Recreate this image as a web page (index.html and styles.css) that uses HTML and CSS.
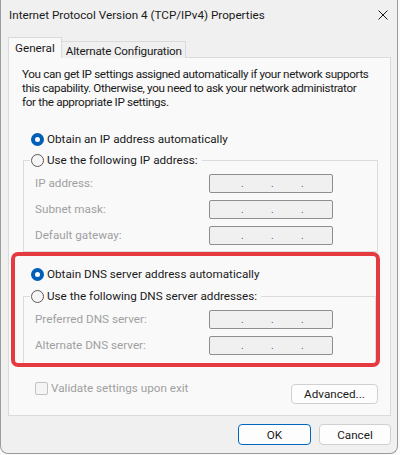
FILE: index.html
```html
<!DOCTYPE html>
<html lang="en">
<head>
    <meta charset="UTF-8">
    <title>Internet Protocol Version 4 (TCP/IPv4) Properties</title>
    <link rel="stylesheet" href="styles.css">
</head>
<body>
    <div class="window">
        <div class="titlebar">
            <span class="title">Internet Protocol Version 4 (TCP/IPv4) Properties</span>
            <svg class="close" width="10" height="10" viewBox="0 0 10 10">
                <path d="M0.5 0.5 L9.5 9.5 M9.5 0.5 L0.5 9.5" stroke="#1a1a1a" stroke-width="1" fill="none"/>
            </svg>
        </div>
        <div class="body">
            <div class="tabs">
                <div class="tab active">General</div>
                <div class="tab">Alternate Configuration</div>
            </div>
            <div class="panel">
                <p class="intro">You can get IP settings assigned automatically if your network supports<br>
                this capability. Otherwise, you need to ask your network administrator<br>
                for the appropriate IP settings.</p>

                <label class="radio first"><span class="dot checked"></span>Obtain an IP address automatically</label>
                <fieldset class="group ip-group">
                    <legend><label class="radio"><span class="dot"></span>Use the following IP address:</label></legend>
                    <div class="row"><span class="label">IP address:</span><span class="ipbox"><i>.</i><i>.</i><i>.</i></span></div>
                    <div class="row"><span class="label">Subnet mask:</span><span class="ipbox"><i>.</i><i>.</i><i>.</i></span></div>
                    <div class="row"><span class="label">Default gateway:</span><span class="ipbox"><i>.</i><i>.</i><i>.</i></span></div>
                </fieldset>

                <label class="radio dns-first"><span class="dot checked"></span>Obtain DNS server address automatically</label>
                <fieldset class="group dns-group">
                    <legend><label class="radio"><span class="dot"></span>Use the following DNS server addresses:</label></legend>
                    <div class="row"><span class="label">Preferred DNS server:</span><span class="ipbox"><i>.</i><i>.</i><i>.</i></span></div>
                    <div class="row"><span class="label">Alternate DNS server:</span><span class="ipbox"><i>.</i><i>.</i><i>.</i></span></div>
                </fieldset>

                <div class="options">
                    <label class="check"><span class="box"></span>Validate settings upon exit</label>
                    <button type="button" class="btn advanced">Advanced...</button>
                </div>

                <div class="highlight"></div>
            </div>
            <div class="footer">
                <button type="button" class="btn ok">OK</button>
                <button type="button" class="btn">Cancel</button>
            </div>
        </div>
    </div>
</body>
</html>
```

FILE: styles.css
```css
body {
    margin: 0;
    background: #fafafa;
    font-family: Roboto, "Noto Sans", sans-serif;
    font-size: 11.7px;
    color: #1a1a1a;
}

.window {
    width: 398px;
    height: 454px;
    box-sizing: border-box;
    background: #f0f0f0;
    border: 1px solid #9c9c9c;
    border-top: none;
    border-radius: 0 0 8px 8px;
}

.titlebar {
    height: 30px;
    display: flex;
    align-items: center;
    justify-content: space-between;
    padding: 0 9px 0 8px;
}

.title {
    line-height: 16px;
}

.body {
    padding: 8px 6px 0 7px;
}

.tabs {
    display: flex;
    align-items: flex-end;
    height: 20px;
    margin-bottom: -1px;
    position: relative;
    z-index: 1;
}

.tab {
    height: 17px;
    box-sizing: border-box;
    padding: 0 3px 0 4px;
    border: 1px solid #dadada;
    border-bottom: none;
    line-height: 18px;
    letter-spacing: -0.2px;
    background: #f0f0f0;
}

.tab.active {
    height: 21px;
    padding: 0 6px;
    line-height: 21px;
    letter-spacing: 0;
    background: #f9f9f9;
}

.tab + .tab {
    border-left: none;
}

.panel {
    position: relative;
    height: 359px;
    box-sizing: border-box;
    border: 1px solid #dadada;
    background: #f9f9f9;
    padding: 9px 12px 0 13px;
}

.intro {
    margin: 0;
    line-height: 14px;
    letter-spacing: -0.35px;
    white-space: nowrap;
}

.radio {
    display: flex;
    align-items: center;
    gap: 3px;
    height: 20px;
    white-space: nowrap;
}

.radio.first {
    margin: 20px 0 0 9px;
}

.radio.dns-first {
    margin: 12px 0 0 9px;
}

.dot {
    width: 13px;
    height: 13px;
    box-sizing: border-box;
    border-radius: 50%;
    border: 1px solid #5a5a5a;
    background: #f5f5f5;
}

.dot.checked {
    border: 4px solid #005fb8;
    background: #fff;
}

.group {
    margin: 1px 0 0 1px;
    padding: 0 0 3px;
    border: 1px solid #dcdcdc;
    min-width: 0;
}

.group legend {
    margin-left: 6px;
    padding: 0 4px 0 1px;
}

.dns-group {
    margin-top: 2px;
    margin-right: 2px;
    padding-bottom: 6px;
}

.row {
    display: grid;
    grid-template-columns: 174px 124px;
    align-items: center;
    height: 26px;
    padding-left: 11px;
}

.label {
    color: #a0a0a0;
}

.ipbox {
    height: 19px;
    box-sizing: border-box;
    border: 1px solid #8e8e8e;
    border-radius: 2px;
    background: #f0f0f0;
    display: flex;
    padding-left: 31px;
    line-height: 17px;
}

.ipbox i {
    font-style: normal;
    width: 30px;
    color: #55508a;
    font-size: 10px;
}

.options {
    display: flex;
    justify-content: space-between;
    align-items: flex-start;
    margin: 16px 0 0 13px;
}

.check {
    display: flex;
    align-items: center;
    gap: 3px;
    color: #a0a0a0;
    line-height: 15px;
}

.box {
    width: 13px;
    height: 13px;
    box-sizing: border-box;
    border: 1px solid #c2c2c2;
    border-radius: 2px;
    background: #f5f5f5;
}

.btn {
    font-family: inherit;
    font-size: 11.7px;
    color: #1a1a1a;
    height: 21px;
    padding: 0;
    border: 1px solid #d0d0d0;
    border-radius: 4px;
    background: #fdfdfd;
}

.advanced {
    width: 87px;
    margin-top: 3px;
    height: 20px;
}

.footer {
    display: flex;
    justify-content: flex-end;
    gap: 8px;
    padding-top: 8px;
}

.footer .btn {
    width: 72px;
}

.footer .ok {
    width: 73px;
    border-color: #0067c0;
}

.highlight {
    position: absolute;
    left: 2px;
    top: 194px;
    width: 369px;
    height: 115px;
    box-sizing: border-box;
    border: 4px solid #e43a40;
    border-radius: 7px;
    pointer-events: none;
}
```
